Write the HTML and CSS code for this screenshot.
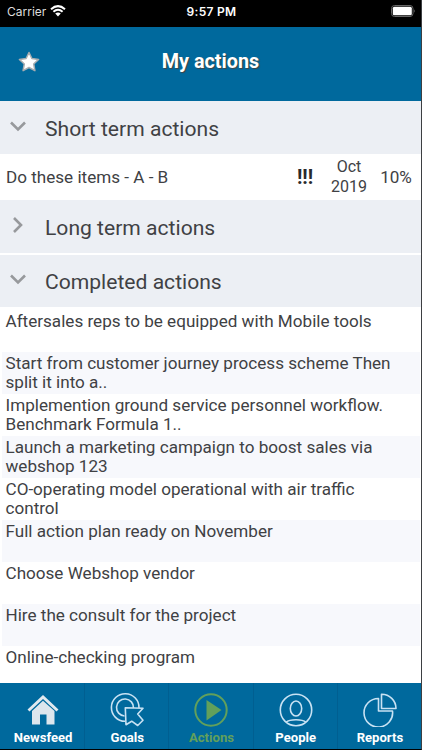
FILE: index.html
```html
<!DOCTYPE html>
<html lang="en">
<head>
<meta charset="utf-8">
<title>My actions</title>
<link rel="stylesheet" href="styles.css">
</head>
<body>
<div class="screen">
  <div class="status">
    <div class="carrier"><span>Carrier</span>
      <svg class="wifi" width="16" height="12" viewBox="0 0 16 12"><path d="M1 4.2Q8-2 15 4.2M3.4 6.8Q8 2.8 12.6 6.8" fill="none" stroke="#fff" stroke-width="2"/><path d="M5.2 8.6Q8 6.3 10.8 8.6L8 11.4z" fill="#fff"/></svg>
    </div>
    <div class="time">9:57 PM</div>
    <svg class="battery" width="25" height="12" viewBox="0 0 25 12"><rect x=".5" y=".5" width="21.500" height="11" rx="3" fill="none" stroke="#666"/><rect x="1.800" y="1.800" width="19" height="8.400" rx="1.5" fill="#fff"/><path d="M23.300 4.200q1.500 1.700 0 3.500z" fill="#777"/></svg>
  </div>
  <header class="header">
    <svg class="star" width="24" height="24" viewBox="0 0 24 24"><path d="M12 2.5l2.9 6 6.7.9-4.9 4.6 1.2 6.7-5.9-3.2-5.9 3.2 1.2-6.7-4.9-4.6 6.7-.9z" fill="#fff" stroke="#a9adb0" stroke-width="1.5" stroke-linejoin="round"/></svg>
    <h1>My actions</h1>
  </header>
  <main class="content">
    <section class="group">
      <h2><svg width="20" height="20" viewBox="0 0 20 20"><path d="M4 6.5l7 7 7-7"/></svg><span>Short term actions</span></h2>
      <div class="action">
        <span class="name">Do these items - A - B</span>
        <b class="priority">!!!</b>
        <span class="date">Oct<br>2019</span>
        <span class="progress">10%</span>
      </div>
    </section>
    <section class="group long">
      <h2><svg width="20" height="20" viewBox="0 0 20 20"><path d="M7 3l7 7-7 7"/></svg><span>Long term actions</span></h2>
    </section>
    <section class="group">
      <h2><svg width="20" height="20" viewBox="0 0 20 20"><path d="M4 6.5l7 7 7-7"/></svg><span>Completed actions</span></h2>
      <ul class="done">
        <li>Aftersales reps to be equipped with Mobile tools</li>
        <li>Start from customer journey process scheme Then<br>split it into a..</li>
        <li>Implemention ground service personnel workflow.<br>Benchmark Formula 1..</li>
        <li>Launch a marketing campaign to boost sales via<br>webshop 123</li>
        <li>CO-operating model operational with air traffic<br>control</li>
        <li>Full action plan ready on November</li>
        <li>Choose Webshop vendor</li>
        <li>Hire the consult for the project</li>
        <li>Online-checking program</li>
      </ul>
    </section>
  </main>
  <nav class="tabs">
    <a><svg width="36" height="36" viewBox="0 0 36 36"><path d="M2.500 18.500L18 4l15.500 14.500-2 2L18 8 4.500 20.500z" fill="#e1e9ef"/><path d="M7 20L18 9.700l11.500 10.300v13.500h-8V23.500h-6.500v10H7z" fill="#dde6ed"/></svg><span>Newsfeed</span></a>
    <a><svg class="line" width="36" height="36" viewBox="0 0 36 36"><path d="M16 30.300A13.800 13.800 0 1 1 30 17M15.500 25A8.500 8.500 0 1 1 24.500 17"/><path d="M16.300 16.800L34 17.300l-5.300 5.700 5.300 6.200-5.300 5.300-6-4.300-5.700 3.500z"/></svg><span>Goals</span></a>
    <a class="active"><svg width="36" height="36" viewBox="0 0 36 36"><circle cx="18" cy="19" r="15.700" fill="none" stroke="#62a05b" stroke-width="2"/><path d="M13.500 9L28.500 19l-15 10.500z" fill="#62a05b"/></svg><span>Actions</span></a>
    <a><svg class="line" width="36" height="36" viewBox="0 0 36 36"><circle cx="18" cy="19" r="15.700"/><ellipse cx="18" cy="17.500" rx="5.700" ry="7.500"/><path d="M8 31.300Q11 28.800 18 28.800t10 2.500"/></svg><span>People</span></a>
    <a><svg class="line" width="36" height="36" viewBox="0 0 36 36"><path d="M16.500 7.500V20H30.500A14.300 14.300 0 1 1 16.500 7.500z"/><path d="M19.500 3.200A14.300 14.300 0 0 1 34 17.500H19.500z"/></svg><span>Reports</span></a>
  </nav>
</div>
</body>
</html>
```
FILE: styles.css
```css
* { box-sizing: border-box; }
body { margin: 0; background: #000; }
.screen {
  width: 422px; height: 750px; overflow: hidden;
  display: flex; flex-direction: column;
  border-right: 1px solid #3d3f42; border-bottom: 1px solid #000;
  font-family: Roboto, sans-serif; color: #404144;
}
.status {
  height: 27px; background: #000; color: #fff; flex: none;
  display: grid; grid-template-columns: 1fr auto 1fr; align-items: center;
  padding: 0 5px 5px 7px;
  font: 12px Inter, sans-serif;
}
.carrier { display: flex; align-items: center; gap: 4px; color: #ddd; }
.time { font-weight: 600; letter-spacing: .3px; }
.battery { justify-self: end; }
.header {
  height: 74px; flex: none; background: #00699d;
  display: grid; grid-template-columns: 58px 1fr 58px; align-items: center;
  padding-bottom: 4px;
}
.star { margin-left: 17px; }
h1 {
  margin: 0; text-align: center; color: #fff;
  font-size: 19.8px; line-height: 24px; text-shadow: 1px 1px 1px #444;
}
.content { height: 582px; flex: none; background: #fff; }
h2 {
  margin: 0; height: 52.5px; background: #eceff4;
  display: flex; align-items: center; padding: 3px 0 0 7px;
  font-size: 21.1px; font-weight: 400;
}
h2 svg { margin: -5px 18px 0 0; fill: none; stroke: #97999c; stroke-width: 2.6; }
.action {
  height: 46.5px; padding-left: 6px; font-size: 17.1px;
  display: grid; grid-template-columns: 278px 42px 46px 48px; align-items: center;
}
.priority { text-align: center; font-size: 20px; color: #292a2c; }
.date { text-align: center; font-size: 16px; line-height: 20px; }
.progress { text-align: center; }
.long { border-bottom: 2px solid #fff; }
.long + .group h2 { height: 52px; padding-top: 2px; }
.done {
  list-style: none; margin: 0; padding: 3px 1px 0 2px;
  font-size: 17.1px; line-height: 19.5px;
}
.done li { height: 42.1px; padding: 2px 0 0 3.5px; white-space: nowrap; }
.done li:nth-child(even) { background: #f7f8fc; }
.tabs {
  height: 66px; flex: none; background: #00699d;
  display: grid; grid-template-columns: repeat(5, 1fr);
}
.tabs a {
  display: flex; flex-direction: column; align-items: center;
  padding: 8px 0 0 1px; border-left: 1px solid #005f91;
  color: #fff; font-size: 13.1px; font-weight: 700; line-height: 22px;
}
.tabs a:first-child { border-left: 0; padding-left: 2px; }
.tabs .active { color: #62a05b; }
.line { fill: none; stroke: #c8e2f3; stroke-width: 1.6; stroke-linejoin: round; }
```
